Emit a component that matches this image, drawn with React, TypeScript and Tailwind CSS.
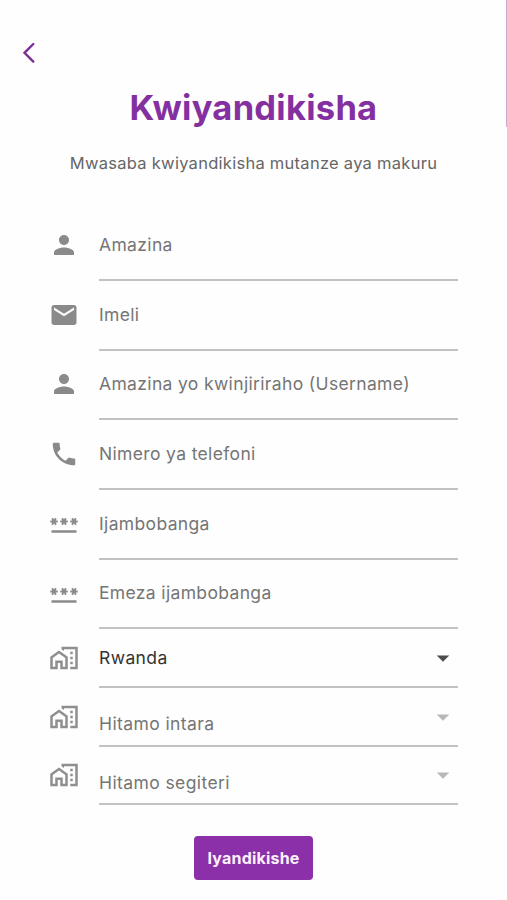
import React from 'react';
import { MdPerson, MdEmail, MdPhone, MdPassword, MdOutlineHomeWork, MdArrowDropDown } from 'react-icons/md';
import type { IconType } from 'react-icons';

interface Field {
    label: string;
    icon: IconType;
}

interface SelectField {
    text: string;
    selected: boolean;
}

const fields: Field[] = [
    { label: 'Amazina', icon: MdPerson },
    { label: 'Imeli', icon: MdEmail },
    { label: 'Amazina yo kwinjiriraho (Username)', icon: MdPerson },
    { label: 'Nimero ya telefoni', icon: MdPhone },
    { label: 'Ijambobanga', icon: MdPassword },
    { label: 'Emeza ijambobanga', icon: MdPassword },
];

const selects: SelectField[] = [
    { text: 'Rwanda', selected: true },
    { text: 'Hitamo intara', selected: false },
    { text: 'Hitamo segiteri', selected: false },
];

const InputRow: React.FC<{ field: Field }> = ({ field }) => {
    const Icon = field.icon;
    return (
        <label className="flex h-[69.7px] items-stretch">
            <Icon className="mt-[18.8px] mr-5 size-[30px] shrink-0 text-[#8a8a8a]" />
            <span className="flex-1 border-b-2 border-[#c2c2c2] pt-[20.7px] text-[17.5px] leading-[26px] tracking-[0.35px] text-[#757575]">
                {field.label}
            </span>
        </label>
    );
};

const SelectRow: React.FC<{ field: SelectField }> = ({ field }) => (
    <div className="flex h-[58.6px] items-stretch">
        <MdOutlineHomeWork className="mt-[13.8px] mr-5 size-[30px] shrink-0 text-[#8f8f8f]" />
        <div className="flex flex-1 items-start border-b-2 border-[#c2c2c2]">
            <span
                className={`flex-1 text-[17.5px] leading-[26px] tracking-[0.4px] ${
                    field.selected ? 'pt-4 text-[#333333]' : 'pt-[23.3px] text-[#757575]'
                }`}
            >
                {field.text}
            </span>
            <MdArrowDropDown className={`mt-[13.8px] size-[30px] ${field.selected ? 'text-[#4d4d4d]' : 'text-[#b8b8b8]'}`} />
        </div>
    </div>
);

const App: React.FC = () => {
    return (
        <div className="relative h-[900px] w-[507px] overflow-hidden bg-[#fefefe] font-['Inter',sans-serif]">
            {/* scroll indicator */}
            <div className="absolute top-0 right-0 h-[127px] w-px bg-[#cdaad6]" />

            <header className="flex h-[84px] items-start pt-[42px] pl-[22px]">
                <svg viewBox="0 0 14 22" className="h-[22px] w-[14px]" fill="none" stroke="#7b2f96" strokeWidth="2.4">
                    <path d="M11.3 2 2.5 10.8l8.8 8.8" strokeLinecap="round" />
                </svg>
            </header>

            <h1 className="text-center text-[34.5px] leading-[48px] font-bold tracking-[0.25px] text-[#8430a0]">Kwiyandikisha</h1>
            <p className="mt-[18px] text-center text-[16.5px] leading-[26px] tracking-[0.27px] text-[#666666]">
                Mwasaba kwiyandikisha mutanze aya makuru
            </p>

            <form className="mt-[35.3px] pr-[49px] pl-[49px]">
                {fields.map(field => (
                    <InputRow key={field.label} field={field} />
                ))}
                {selects.map(field => (
                    <SelectRow key={field.text} field={field} />
                ))}
                <button
                    type="button"
                    className="mx-auto mt-[31px] block h-11 w-[119px] rounded-[4px] bg-[#8c30a9] text-[16px] font-bold tracking-[0.2px] text-[#faf0fc]"
                >
                    Iyandikishe
                </button>
            </form>
        </div>
    );
};

export default App;
